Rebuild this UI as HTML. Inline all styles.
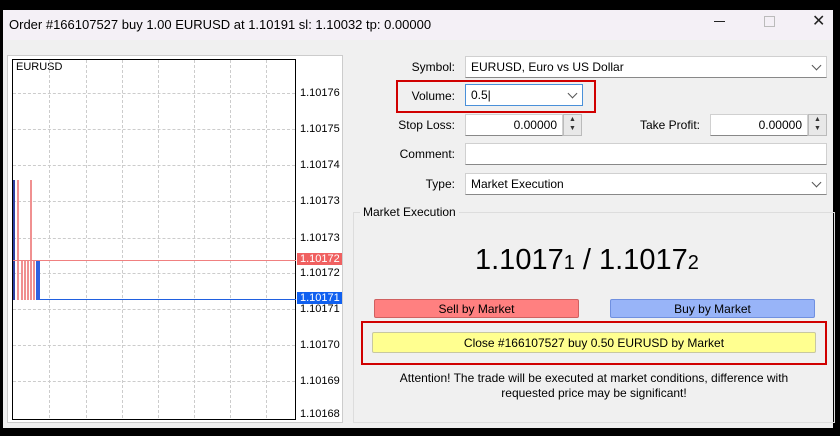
<!DOCTYPE html>
<html><head><style>
body{margin:0;width:840px;height:436px;background:#000;position:relative;overflow:hidden;font-family:"Liberation Sans",sans-serif;font-size:12px;color:#000}
.a{position:absolute}
.win{left:3px;top:10px;width:830px;height:418px;background:#f0f0f0}
.title{left:3px;top:10px;width:830px;height:30px;background:#f4f0f6}
.lbl{text-align:right;width:120px;font-size:12px}
.inp{background:#fff;border:1px solid #d0d0d0;border-bottom:1px solid #888;box-sizing:border-box;height:22px;font-size:12px;line-height:20px;padding-left:5px}
.chev{position:absolute;right:6px;top:5px;width:6px;height:6px;border-right:1px solid #555;border-bottom:1px solid #555;transform:rotate(45deg)}
.spin{background:#e8e8e8;border:1px solid #bbb;box-sizing:border-box;height:22px;width:19px;font-size:7px;text-align:center;line-height:9px;color:#333}
.pl{font-size:11px;left:300px}
.hg{left:13px;width:282px;border-top:1px dashed #ccc;height:0}
.vg{top:60px;height:358px;border-left:1px dashed #ccc;width:0}
.btn{height:19px;box-sizing:border-box;text-align:center;line-height:18px;font-size:12px;border-radius:2px}
</style></head><body>
<div class="a win"></div>
<div class="a title"></div>
<div class="a" style="left:9px;top:17px;font-size:13px">Order #166107527 buy 1.00 EURUSD at 1.10191 sl: 1.10032 tp: 0.00000</div>
<div class="a" style="left:714px;top:21px;width:11px;border-top:1px solid #222"></div>
<div class="a" style="left:764px;top:16px;width:9px;height:9px;border:1px solid #bbb"></div>
<div class="a" style="left:812px;top:11px;font-size:16px;color:#222">✕</div>

<div class="a" style="left:7px;top:55px;width:336px;height:368px;background:#fff;border:1px solid #ccc;box-sizing:border-box"></div>
<div class="a" style="left:12px;top:59px;width:284px;height:361px;border:1px solid #000;box-sizing:border-box"></div>
<div class="a" style="left:16px;top:61px;font-size:11px">EURUSD</div>
<div class="a hg" style="top:93px"></div><div class="a hg" style="top:129px"></div><div class="a hg" style="top:165px"></div><div class="a hg" style="top:201px"></div><div class="a hg" style="top:238px"></div><div class="a hg" style="top:273px"></div><div class="a hg" style="top:309px"></div><div class="a hg" style="top:345px"></div><div class="a hg" style="top:381px"></div>
<div class="a vg" style="left:49px"></div><div class="a vg" style="left:86px"></div><div class="a vg" style="left:122px"></div><div class="a vg" style="left:158px"></div><div class="a vg" style="left:194px"></div><div class="a vg" style="left:230px"></div><div class="a vg" style="left:266px"></div>
<div class="a" style="left:13px;top:180px;width:2px;height:120px;background:#3040a0"></div>
<div class="a" style="left:17px;top:180px;width:2px;height:120px;background:#f09090"></div>
<div class="a" style="left:21px;top:260px;width:18px;height:40px;background:repeating-linear-gradient(90deg,#f09090 0 2px,#fff 2px 3px)"></div>
<div class="a" style="left:30px;top:180px;width:2px;height:80px;background:#f09090"></div>
<div class="a" style="left:36px;top:260px;width:4px;height:40px;background:#3060e0"></div>
<div class="a" style="left:13px;top:260px;width:283px;border-top:1px solid #f08080"></div>
<div class="a" style="left:40px;top:299px;width:256px;border-top:1px solid #2060e0"></div>
<div class="a pl" style="top:87px">1.10176</div><div class="a pl" style="top:123px">1.10175</div><div class="a pl" style="top:159px">1.10174</div><div class="a pl" style="top:195px">1.10173</div><div class="a pl" style="top:232px">1.10173</div><div class="a pl" style="top:267px">1.10172</div><div class="a pl" style="top:303px">1.10171</div><div class="a pl" style="top:339px">1.10170</div><div class="a pl" style="top:375px">1.10169</div><div class="a pl" style="top:408px">1.10168</div>
<div class="a pl" style="left:297px;top:253px;width:45px;background:#f06060;color:#fff;padding-left:3px;box-sizing:border-box">1.10172</div>
<div class="a pl" style="left:297px;top:292px;width:45px;background:#1060f0;color:#fff;padding-left:3px;box-sizing:border-box">1.10171</div>

<div class="a lbl" style="left:335px;top:60px">Symbol:</div>
<div class="a inp" style="left:465px;top:56px;width:362px">EURUSD, Euro vs US Dollar<span class="chev"></span></div>
<div class="a lbl" style="left:335px;top:89px">Volume:</div>
<div class="a inp" style="left:465px;top:84px;width:118px;border:1px solid #4a90d9">0.5|<span class="chev"></span></div>
<div class="a" style="left:396px;top:80px;width:200px;height:33px;border:2px solid #d00000;box-sizing:border-box"></div>
<div class="a lbl" style="left:335px;top:118px">Stop Loss:</div>
<div class="a inp" style="left:465px;top:114px;width:98px;text-align:right;padding-right:5px">0.00000</div>
<div class="a spin" style="left:563px;top:114px">▲<br>▼</div>
<div class="a lbl" style="left:580px;top:118px">Take Profit:</div>
<div class="a inp" style="left:710px;top:114px;width:98px;text-align:right;padding-right:5px">0.00000</div>
<div class="a spin" style="left:808px;top:114px">▲<br>▼</div>
<div class="a lbl" style="left:335px;top:147px">Comment:</div>
<div class="a inp" style="left:465px;top:143px;width:362px"></div>
<div class="a lbl" style="left:335px;top:177px">Type:</div>
<div class="a inp" style="left:465px;top:173px;width:362px">Market Execution<span class="chev"></span></div>

<div class="a" style="left:353px;top:212px;width:482px;height:211px;border:1px solid #ddd;box-sizing:border-box"></div>
<div class="a" style="left:360px;top:205px;background:#f0f0f0;padding:0 3px">Market Execution</div>
<div class="a" style="left:475px;top:244px;font-size:29px">1.1017<span style="font-size:20px">1</span> / 1.1017<span style="font-size:20px">2</span></div>
<div class="a btn" style="left:374px;top:299px;width:205px;background:#ff8080;border:1px solid #d06060">Sell by Market</div>
<div class="a btn" style="left:610px;top:299px;width:205px;background:#98b4f8;border:1px solid #7090e0">Buy by Market</div>
<div class="a" style="left:361px;top:321px;width:466px;height:44px;border:2px solid #d00000;box-sizing:border-box"></div>
<div class="a btn" style="left:372px;top:332px;width:444px;height:21px;line-height:20px;background:#ffff90;border:1px solid #c8c8a0">Close #166107527 buy 0.50 EURUSD by Market</div>
<div class="a" style="left:353px;top:371px;width:482px;text-align:center;line-height:15px">Attention! The trade will be executed at market conditions, difference with<br>requested price may be significant!</div>
</body></html>
